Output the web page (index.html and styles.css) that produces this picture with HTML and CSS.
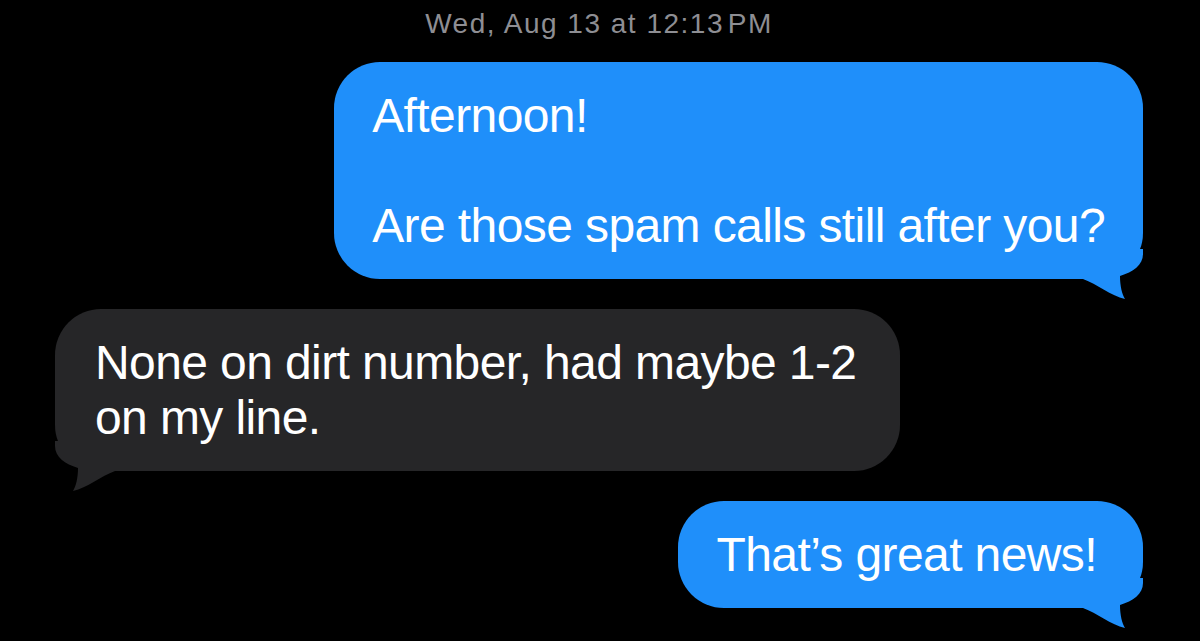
FILE: index.html
```html
<!DOCTYPE html>
<html lang="en">
<head>
    <meta charset="UTF-8">
    <meta name="viewport" content="width=device-width, initial-scale=1.0">
    <title>Messages</title>
    <link rel="stylesheet" href="styles.css">
</head>
<body>
    <div class="thread">
        <div class="stamp">Wed, Aug 13 at 12:13&#8202;PM</div>

        <!-- outgoing -->
        <div class="row out">
            <div class="bubble sent">
                Afternoon!<br><br>Are those spam calls still after you?
                <svg class="tail" width="60" height="50" viewBox="0 0 60 50"><path d="M0,0 H60 V5 C60,16 50,23 37,27 C37,37 39,45 42,50 C28,47 14,35 0,30 Z"/></svg>
            </div>
        </div>

        <!-- incoming -->
        <div class="row in">
            <div class="bubble received">
                None on dirt number, had maybe 1-2 on my line.
                <svg class="tail" width="60" height="50" viewBox="0 0 60 50"><path d="M0,0 H60 V5 C60,16 50,23 37,27 C37,37 39,45 42,50 C28,47 14,35 0,30 Z"/></svg>
            </div>
        </div>

        <div class="row out">
            <div class="bubble sent short">
                That&rsquo;s great news!
                <svg class="tail" width="60" height="50" viewBox="0 0 60 50"><path d="M0,0 H60 V5 C60,16 50,23 37,27 C37,37 39,45 42,50 C28,47 14,35 0,30 Z"/></svg>
            </div>
        </div>
    </div>
</body>
</html>
```

FILE: styles.css
```css
body {
    background-color: #000000;
    color: #ffffff;
    font-family: "Liberation Sans", Arial, sans-serif;
    margin: 0;
    height: 641px;
    overflow: hidden;
}
.thread {
    display: flex;
    flex-direction: column;
    gap: 30px;
    padding: 0 57px 0 55px;
}
.stamp {
    text-align: center;
    color: #8e8e93;
    font-size: 28px;
    letter-spacing: 1.5px;
    line-height: 32px;
    padding-top: 8px;
    margin-bottom: -8px;
}
.row {
    display: flex;
}
.row.out {
    justify-content: flex-end;
}
.row.in {
    justify-content: flex-start;
}
.bubble {
    position: relative;
    font-size: 48px;
    letter-spacing: -0.6px;
    line-height: 55px;
    padding: 26px 38px;
    border-radius: 46px;
}
.bubble.sent {
    background-color: #1f8ffa;
}
.bubble.short {
    padding-right: 46px;
}
.bubble.received {
    background-color: #262628;
    max-width: 845px;
    box-sizing: border-box;
    padding-left: 40px;
}
.tail {
    position: absolute;
    bottom: -20px;
    display: block;
}
.sent .tail {
    right: 0;
    fill: #1f8ffa;
}
.received .tail {
    left: 0;
    fill: #262628;
    transform: scaleX(-1);
}
```
